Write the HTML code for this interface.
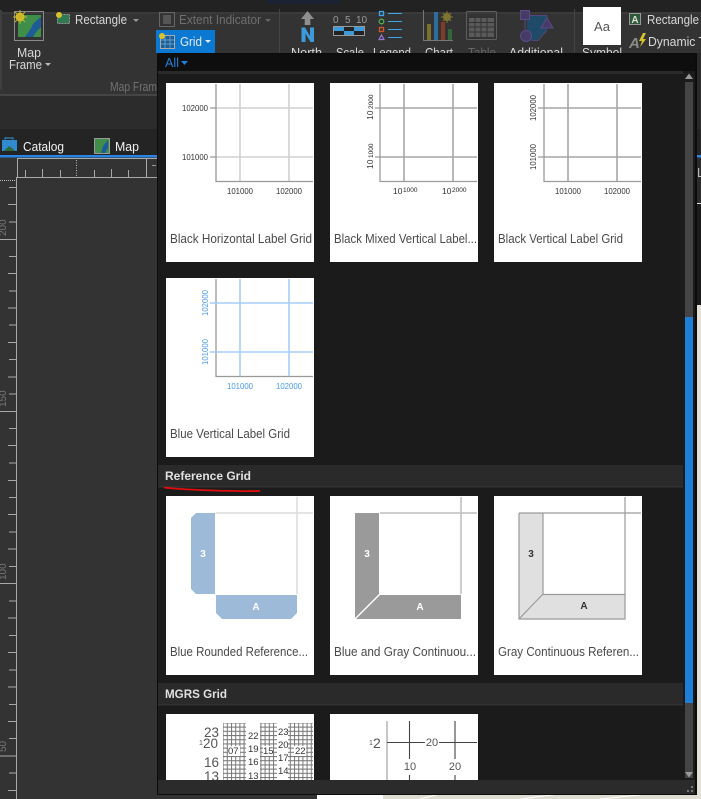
<!DOCTYPE html>
<html><head><meta charset="utf-8"><style>
html,body{margin:0;padding:0;background:#333;width:701px;height:799px;overflow:hidden}
svg{display:block}
text{font-family:"Liberation Sans",sans-serif;font-size:12.5px}
.r{fill:#d8d8d8}
.c{fill:#4a4a4a;font-size:12.5px}
.g{fill:#333;font-size:8.5px}
.b{fill:#4a98f0;font-size:8.5px}
.h{fill:#e0e0e0;font-weight:bold;font-size:12px}
</style></head><body>
<svg width="701" height="799" viewBox="0 0 701 799" xmlns="http://www.w3.org/2000/svg">
<defs>
<pattern id="hatch" width="4.2" height="4.2" patternUnits="userSpaceOnUse"><path d="M0 .5H4.2M.5 0V4.2" stroke="#777" stroke-width="1" fill="none"/></pattern>
<clipPath id="cl"><rect x="158" y="75" width="525" height="705"/></clipPath>
</defs>
<!-- app background -->
<rect width="701" height="799" fill="#333"/>
<rect width="701" height="12" fill="#222"/>
<rect x="267" width="73" height="4" fill="#1a2233"/>
<rect y="12" width="701" height="2" fill="#3a3a3a"/>
<rect x="0" y="94" width="160" height="2" fill="#454545"/>
<rect y="96" width="160" height="33" fill="#2c2c2c"/>
<rect y="129" width="160" height="26" fill="#242424"/>
<rect y="155" width="160" height="2.500" fill="#2a85e0"/>
<rect x="0" y="10" width="2" height="80" fill="#3f3f3f"/>

<!-- Map frame -->
<rect x="14.500" y="11.500" width="29" height="29" fill="none" stroke="#8a8a8a"/>
<rect x="18" y="15" width="23" height="22" fill="#3f8f4a"/>
<path d="M25 37 L30 30 L33 24 L37 20 L41 17 V27 L36 32 L33 37Z" fill="#1d5c96"/>
<circle cx="20" cy="17" r="4.500" fill="#d9c22c"/><path d="M20 10V24M13 17H27M15 12L25 22M25 12L15 22" stroke="#c9b326" stroke-width="1"/>
<text x="17" y="57" class="r" textLength="24" lengthAdjust="spacingAndGlyphs">Map</text>
<text x="9" y="69" class="r" textLength="33" lengthAdjust="spacingAndGlyphs">Frame</text>
<path d="M45 63h6l-3 3z" fill="#bbb"/>
<!-- Rectangle -->
<rect x="57.500" y="14.500" width="12" height="9" fill="#2f7a50" stroke="#999" stroke-dasharray="2 1"/>
<circle cx="59" cy="15" r="3" fill="#d9c22c"/>
<text x="75" y="24" class="r" textLength="52" lengthAdjust="spacingAndGlyphs">Rectangle</text>
<path d="M133 19h6l-3 3z" fill="#999"/>
<!-- Extent -->
<rect x="159.500" y="12.500" width="15" height="14" fill="none" stroke="#666"/><rect x="163" y="15" width="8" height="9" fill="#555"/>
<text x="179" y="24" fill="#6f6f6f" textLength="82" lengthAdjust="spacingAndGlyphs">Extent Indicator</text>
<path d="M265 19h6l-3 3z" fill="#666"/>
<!-- Grid -->
<rect x="156" y="30" width="59" height="23" fill="#0b78d2"/>
<rect x="160.500" y="35.500" width="14" height="13" fill="#1b5f96" stroke="#aaa"/>
<path d="M165 36v12M170 36v12M161 40h13M161 44h13" stroke="#7fb0d8" stroke-width=".7"/>
<circle cx="162" cy="36" r="3" fill="#d9c22c"/>
<text x="180" y="46" fill="#e8e8e8" textLength="22" lengthAdjust="spacingAndGlyphs">Grid</text>
<path d="M205 40h6l-3 3z" fill="#e8e8e8"/>
<text x="110" y="91" fill="#717171" textLength="47" lengthAdjust="spacingAndGlyphs">Map Fram</text>
<rect x="279" y="9" width="1" height="44" fill="#444"/>
<!-- North -->
<path d="M307.500 11 L301 19 H304.700 V25 H310.300 V19 H314 Z" fill="#8f8f8f"/>
<path d="M301.500 42V27.500H305L310 36V27.500H314V42H310.500L305.500 33.500V42Z" fill="#3d9bdc"/>
<text x="291" y="57" class="r" textLength="31" lengthAdjust="spacingAndGlyphs">North</text>
<!-- Scale -->
<text x="333" y="23" fill="#9a9a9a" style="font-size:10px">0</text>
<text x="345" y="23" fill="#9a9a9a" style="font-size:10px">5</text>
<text x="356" y="23" fill="#9a9a9a" style="font-size:10px">10</text>
<rect x="333.500" y="26.500" width="31" height="9" fill="#222" stroke="#999"/>
<rect x="334" y="27" width="10" height="4" fill="#3d9bdc"/><rect x="344" y="31" width="10" height="4" fill="#3d9bdc"/><rect x="354" y="27" width="10" height="4" fill="#3d9bdc"/>
<text x="336" y="57" class="r" textLength="28" lengthAdjust="spacingAndGlyphs">Scale</text>
<!-- Legend -->
<rect x="379.500" y="11.500" width="4" height="4" fill="none" stroke="#3da5ec" stroke-width="1.300"/><path d="M388 13.500H402" stroke="#3da5ec"/>
<circle cx="381.500" cy="21.500" r="2.300" fill="none" stroke="#4fae4f" stroke-width="1.300"/><path d="M388 21.500H402" stroke="#3da5ec"/>
<rect x="379.500" y="27.500" width="4" height="4" fill="none" stroke="#d0562c" stroke-width="1.300"/><path d="M388 29.500H402" stroke="#3da5ec"/>
<path d="M381.500 35L384 39.500H379Z" fill="none" stroke="#9575d8" stroke-width="1.200"/><path d="M388 37.500H402" stroke="#3da5ec"/>
<text x="373" y="57" class="r" textLength="38" lengthAdjust="spacingAndGlyphs">Legend</text>
<!-- Chart -->
<path d="M423.500 10V40.500H453" stroke="#777" fill="none"/>
<rect x="427" y="24" width="4" height="16" fill="#7d6f2c"/><rect x="434" y="12" width="4" height="28" fill="#2f6d9c"/><rect x="441" y="22" width="4" height="18" fill="#7f3a28"/><rect x="448" y="29" width="4" height="11" fill="#33663a"/>
<circle cx="447" cy="17" r="4" fill="#7f7430"/><path d="M447 11V23M441 17H453M443 13L451 21M451 13L443 21" stroke="#7f7430"/>
<text x="425" y="57" class="r" textLength="28" lengthAdjust="spacingAndGlyphs">Chart</text>
<!-- Table -->
<rect x="466.500" y="11.500" width="30" height="28" rx="1" fill="none" stroke="#5e5e5e"/>
<rect x="469" y="18" width="25" height="19" fill="#5a5a5a"/><path d="M469 22.500h25M469 27h25M469 32h25M475 18v19M481 18v19M487 18v19" stroke="#333"/>
<text x="468" y="57" fill="#666" textLength="28" lengthAdjust="spacingAndGlyphs">Table</text>
<!-- Additional -->
<path d="M529 15.500H547V30L536 41H527V19Z" fill="#1f4a68"/>
<path d="M529 15.500H547V20M532 40.500H538L547 30M525 20V31" stroke="#54467c" fill="none"/>
<rect x="520.500" y="10.500" width="9" height="9" fill="#463a66" stroke="#5b4b86"/>
<path d="M547 18L553 28H541Z" fill="#463a66" stroke="#5b4b86"/>
<circle cx="526" cy="36" r="5.500" fill="#463a66" stroke="#5b4b86"/>
<text x="509" y="57" class="r" textLength="54" lengthAdjust="spacingAndGlyphs">Additional</text>
<rect x="574" y="9" width="1" height="44" fill="#444"/>
<!-- Symbol -->
<rect x="583" y="7" width="38" height="38" fill="#fff"/>
<text x="602" y="31" text-anchor="middle" fill="#555" style="font-size:13px">Aa</text>
<text x="582" y="57" class="r" textLength="40" lengthAdjust="spacingAndGlyphs">Symbol</text>
<rect x="629.500" y="13.500" width="11" height="11" fill="#2e5a38" stroke="#999"/>
<text x="635" y="23" text-anchor="middle" fill="#ddd" style="font-size:10px;font-weight:bold">A</text>
<text x="647" y="24" class="r" textLength="52" lengthAdjust="spacingAndGlyphs">Rectangle</text>
<text x="629" y="48" fill="#8a8a8a" style="font-size:15px;font-weight:bold;font-style:italic">A</text>
<path d="M643 33L639 41H642L640 47L646 39H643L646 33Z" fill="#d9c22c"/>
<text x="648" y="46" class="r" textLength="58" lengthAdjust="spacingAndGlyphs">Dynamic T</text>

<!-- tabs -->
<path d="M5 139.500V138H13V139.500" stroke="#3d9bdc" fill="none"/>
<rect x="2" y="140" width="15" height="11" fill="#2f8ad0"/><path d="M4 151L9 146L12 148L15 151Z" fill="#2c6a3c"/>
<text x="23" y="151" fill="#f2f2f2" textLength="41" lengthAdjust="spacingAndGlyphs">Catalog</text>
<rect x="94.500" y="138.500" width="15" height="15" fill="#3f8f4a" stroke="#9a9a9a"/>
<path d="M101 153L103 146L108 140V148L105 153Z" fill="#1d5c96"/>
<text x="115" y="151" fill="#f2f2f2" textLength="24" lengthAdjust="spacingAndGlyphs">Map</text>

<!-- rulers -->
<path d="M17.500 177V158.500H157M146.500 158V177M17 177.500H157M16.500 177V799" stroke="#a8a8a8" fill="none"/>
<path d="M25.500 177V170M42.500 177V169M60.500 177V170M94.500 177V170M111.500 177V169M128.500 177V170" stroke="#a8a8a8"/>
<path d="M76.500 160V177" stroke="#bbb" stroke-dasharray="1 1.500"/>
<path d="M0 180.500H16" stroke="#bbb" stroke-dasharray="1 1"/>
<path d="M152 165.500H156" stroke="#999"/>
<path d="M9 187.500H16M8 204.500H16M9 222H16M0 239.500H16M9 256.500H16M8 273.500H16M9 291H16M8 308H16M9 325H16M8 342.500H16M9 359.500H16M8 377H16M9 394H16M0 411.500H16M9 428.500H16M8 445.500H16M9 463H16M8 480.500H16M9 497.500H16M8 514.500H16M9 532H16M8 549H16M9 566.500H16M0 583.500H16M9 601H16M8 618H16M9 635.500H16M8 652.500H16M9 670H16M8 687H16M9 704.500H16M8 721.500H16M9 738.500H16M0 756H16M9 773H16M8 790.500H16" stroke="#a8a8a8"/>
<text transform="translate(6,236) rotate(-90)" style="font-size:10px" fill="#777">200</text>
<text transform="translate(6,407) rotate(-90)" style="font-size:10px" fill="#777">150</text>
<text transform="translate(6,580) rotate(-90)" style="font-size:10px" fill="#777">100</text>
<text transform="translate(6,752) rotate(-90)" style="font-size:10px" fill="#777">50</text>

<!-- right background -->
<rect x="696" y="53" width="5" height="252" fill="#2b2b2b"/>
<rect x="696" y="129" width="5" height="26" fill="#242424"/>
<rect x="696" y="155" width="5" height="2.500" fill="#2a85e0"/>
<text x="697" y="177" fill="#bbb">L</text>
<rect x="696" y="203" width="5" height="1" fill="#ddd"/>
<rect x="696" y="204" width="5" height="101" fill="#1c1c1c"/>
<rect x="696" y="305" width="5" height="494" fill="#e3e1d6"/>
<rect x="157" y="794" width="226" height="5" fill="#333"/>
<rect x="317" y="794" width="66" height="5" fill="#fff"/>
<rect x="383" y="794" width="314" height="5" fill="#dedbd0"/>
<path d="M420 799L440 794M520 799L560 794M600 799L640 795" stroke="#fff"/>

<!-- popup -->
<rect x="157" y="53" width="540" height="742" fill="#0c0c0c"/>
<rect x="158" y="54" width="537" height="740" fill="#1b1b1b"/>
<rect x="158" y="54" width="537" height="17" fill="#0e0e0e"/>
<rect x="158" y="71" width="525" height="3" fill="#2a2a2a"/>
<text x="165" y="67" fill="#1f7fd8" textLength="14" lengthAdjust="spacingAndGlyphs">All</text>
<path d="M181 61h7l-3.500 4z" fill="#1f7fd8"/>

<!-- scrollbar -->
<rect x="685" y="82" width="8" height="697" fill="#444"/>
<rect x="685" y="317" width="8" height="386" fill="#1e7ed8"/>
<path d="M685 79L689 73.500L693 79Z" fill="#9a9a9a"/>
<path d="M685 772H693L689 777.500Z" fill="#9a9a9a"/>
<rect x="685" y="778" width="8" height="2" fill="#1b1b1b"/>
<rect x="158" y="780" width="537" height="14" fill="#2b2b2b"/>
<path d="M691 786h2v2h-2zM691 790h2v2h-2zM687 790h2v2h-2z" fill="#777"/>

<g clip-path="url(#cl)">
<!-- cards -->
<g fill="#fff">
<rect x="166" y="83" width="148" height="179"/><rect x="330" y="83" width="148" height="179"/><rect x="494" y="83" width="148" height="179"/>
<rect x="166" y="278" width="148" height="179"/>
<rect x="166" y="496" width="148" height="179"/><rect x="330" y="496" width="148" height="179"/><rect x="494" y="496" width="148" height="179"/>
<rect x="166" y="714" width="148" height="80"/><rect x="330" y="714" width="148" height="80"/>
</g>
<!-- card 1 -->
<path d="M240 84V181M289 84V181M216 108H313M216 157H313" stroke="#d0d0d0" stroke-width="1.600"/>
<path d="M216 84V181.500H313M210 108H216M210 157H216" stroke="#999" fill="none" stroke-width="1.300"/>
<text x="182" y="111" class="g" textLength="26" lengthAdjust="spacingAndGlyphs">102000</text><text x="182" y="160" class="g" textLength="26" lengthAdjust="spacingAndGlyphs">101000</text>
<text x="227" y="194" class="g" textLength="26" lengthAdjust="spacingAndGlyphs">101000</text><text x="276" y="194" class="g" textLength="26" lengthAdjust="spacingAndGlyphs">102000</text>
<text x="170" y="243" class="c" textLength="142" lengthAdjust="spacingAndGlyphs">Black Horizontal Label Grid</text>
<!-- card 2 -->
<path d="M404 84V181M453 84V181M380 108H477M380 157H477" stroke="#a6a6a6" stroke-width="1.600"/>
<path d="M380 84V181.500H477M375 108H380M375 157H380" stroke="#9c9c9c" fill="none" stroke-width="1.300"/>
<text transform="translate(373,120) rotate(-90)" class="g">10</text><text transform="translate(373,109) rotate(-90)" fill="#222" style="font-size:6.500px">2000</text>
<text transform="translate(373,169) rotate(-90)" class="g">10</text><text transform="translate(373,158) rotate(-90)" fill="#222" style="font-size:6.500px">1000</text>
<text x="393" y="194" class="g">10</text><text x="403" y="192" fill="#222" style="font-size:6.500px">1000</text>
<text x="442" y="194" class="g">10</text><text x="452" y="192" fill="#222" style="font-size:6.500px">2000</text>
<text x="334" y="243" class="c" textLength="143" lengthAdjust="spacingAndGlyphs">Black Mixed Vertical Label...</text>
<!-- card 3 -->
<path d="M568 84V181M617 84V181M544 108H641M544 157H641" stroke="#a6a6a6" stroke-width="1.600"/>
<path d="M544 84V181.500H641M538 108H544M538 157H544" stroke="#9c9c9c" fill="none" stroke-width="1.300"/>
<text transform="translate(536,121) rotate(-90)" class="g" textLength="26" lengthAdjust="spacingAndGlyphs">102000</text><text transform="translate(536,170) rotate(-90)" class="g" textLength="26" lengthAdjust="spacingAndGlyphs">101000</text>
<text x="555" y="194" class="g" textLength="26" lengthAdjust="spacingAndGlyphs">101000</text><text x="604" y="194" class="g" textLength="26" lengthAdjust="spacingAndGlyphs">102000</text>
<text x="498" y="243" class="c" textLength="125" lengthAdjust="spacingAndGlyphs">Black Vertical Label Grid</text>
<!-- card 4 -->
<path d="M216 279V376.500H313" stroke="#999" fill="none" stroke-width="1.300"/>
<path d="M240 279V376M289 279V376M216 303H313M216 352H313M210 303H216M210 352H216" stroke="#a5cdfa" stroke-width="1.600"/>
<text transform="translate(208,316) rotate(-90)" class="b" textLength="26" lengthAdjust="spacingAndGlyphs">102000</text><text transform="translate(208,365) rotate(-90)" class="b" textLength="26" lengthAdjust="spacingAndGlyphs">101000</text>
<text x="227" y="389" class="b" textLength="26" lengthAdjust="spacingAndGlyphs">101000</text><text x="276" y="389" class="b" textLength="26" lengthAdjust="spacingAndGlyphs">102000</text>
<text x="170" y="438" class="c" textLength="120" lengthAdjust="spacingAndGlyphs">Blue Vertical Label Grid</text>

<!-- headers -->
<rect x="158" y="465" width="525" height="21" fill="#2a2a2a"/><rect x="158" y="486" width="525" height="1.500" fill="#333"/>
<text x="165" y="480" class="h" textLength="86" lengthAdjust="spacingAndGlyphs">Reference Grid</text>
<path d="M164 487.500C185 490 235 491.500 260 491" stroke="#e00d0d" stroke-width="1.800" fill="none"/>
<rect x="158" y="683" width="525" height="21" fill="#2a2a2a"/><rect x="158" y="704" width="525" height="1.500" fill="#333"/>
<text x="165" y="698" class="h" textLength="62" lengthAdjust="spacingAndGlyphs">MGRS Grid</text>

<!-- ref 1 -->
<path d="M216 513H313M297 497V594" stroke="#dcdcdc" stroke-width="1.500"/>
<path d="M196 513H215V594H196L191 589V518Z" fill="#9dbbd8"/>
<path d="M216 595H297V613L291 619H222L216 613Z" fill="#9dbbd8"/>
<text x="203" y="557" text-anchor="middle" fill="#fff" style="font-size:10px;font-weight:bold">3</text>
<text x="256" y="610" text-anchor="middle" fill="#fff" style="font-size:10px;font-weight:bold">A</text>
<text x="170" y="656" class="c" textLength="138" lengthAdjust="spacingAndGlyphs">Blue Rounded Reference...</text>
<!-- ref 2 -->
<path d="M380 513H477M461 497V594" stroke="#bdbdbd" stroke-width="1.500"/>
<path d="M355 513H379V594L355 618Z" fill="#9a9a9a"/>
<path d="M380 595H461V619H356Z" fill="#9a9a9a"/>
<text x="367" y="557" text-anchor="middle" fill="#fff" style="font-size:10px;font-weight:bold">3</text>
<text x="420" y="610" text-anchor="middle" fill="#fff" style="font-size:10px;font-weight:bold">A</text>
<text x="334" y="656" class="c" textLength="142" lengthAdjust="spacingAndGlyphs">Blue and Gray Continuou...</text>
<!-- ref 3 -->
<path d="M519 513H543V594H625V619H519Z" fill="#e0e0e0"/>
<path d="M519 513V619H625V497M519 513H641M543 513V594.500H625M519 619L543 594" stroke="#9a9a9a" fill="none" stroke-width="1.200"/>
<text x="531" y="557" text-anchor="middle" fill="#333" style="font-size:10px;font-weight:bold">3</text>
<text x="584" y="609" text-anchor="middle" fill="#333" style="font-size:10px;font-weight:bold">A</text>
<text x="498" y="656" class="c" textLength="141" lengthAdjust="spacingAndGlyphs">Gray Continuous Referen...</text>

<!-- MGRS 1 -->
<rect x="223" y="723" width="90" height="60" fill="url(#hatch)"/>
<g fill="#fff">
<rect x="246" y="722" width="14" height="60"/><rect x="277" y="722" width="11" height="60"/>
<rect x="228" y="746" width="12" height="10"/><rect x="263" y="746" width="10" height="10"/><rect x="294" y="746" width="12" height="10"/>
</g>
<text x="204" y="737" fill="#555" style="font-size:13.500px">23</text>
<text x="199" y="745" fill="#555" style="font-size:7px">1</text><text x="203" y="748" fill="#555" style="font-size:13.500px">20</text>
<text x="204" y="767" fill="#555" style="font-size:13.500px">16</text>
<text x="204" y="781" fill="#555" style="font-size:13.500px">13</text>
<text x="228" y="754" fill="#333" style="font-size:9.500px">07</text>
<text x="248" y="739" fill="#333" style="font-size:9.500px">22</text>
<text x="248" y="752" fill="#333" style="font-size:9.500px">19</text>
<text x="248" y="765" fill="#333" style="font-size:9.500px">16</text>
<text x="248" y="779" fill="#333" style="font-size:9.500px">13</text>
<text x="263" y="754" fill="#333" style="font-size:9.500px">15</text>
<text x="278" y="735" fill="#333" style="font-size:9.500px">23</text>
<text x="278" y="748" fill="#333" style="font-size:9.500px">20</text>
<text x="278" y="761" fill="#333" style="font-size:9.500px">17</text>
<text x="278" y="774" fill="#333" style="font-size:9.500px">14</text>
<text x="295" y="754" fill="#333" style="font-size:9.500px">22</text>
<!-- MGRS 2 -->
<path d="M387 721V780" stroke="#aaa" stroke-width="1.300"/>
<path d="M409.500 721V759M455 721V759M387 742.500H425M439 742.500H477M409.500 775V780M455 775V780" stroke="#444" stroke-width="1.100"/>
<text x="369" y="745" fill="#555" style="font-size:7px">1</text><text x="373" y="748" fill="#555" style="font-size:14px">2</text>
<text x="432" y="746" text-anchor="middle" fill="#555" style="font-size:11px">20</text>
<text x="410" y="770" text-anchor="middle" fill="#555" style="font-size:11px">10</text>
<text x="455" y="770" text-anchor="middle" fill="#555" style="font-size:11px">20</text>
</g>
</svg>
</body></html>
